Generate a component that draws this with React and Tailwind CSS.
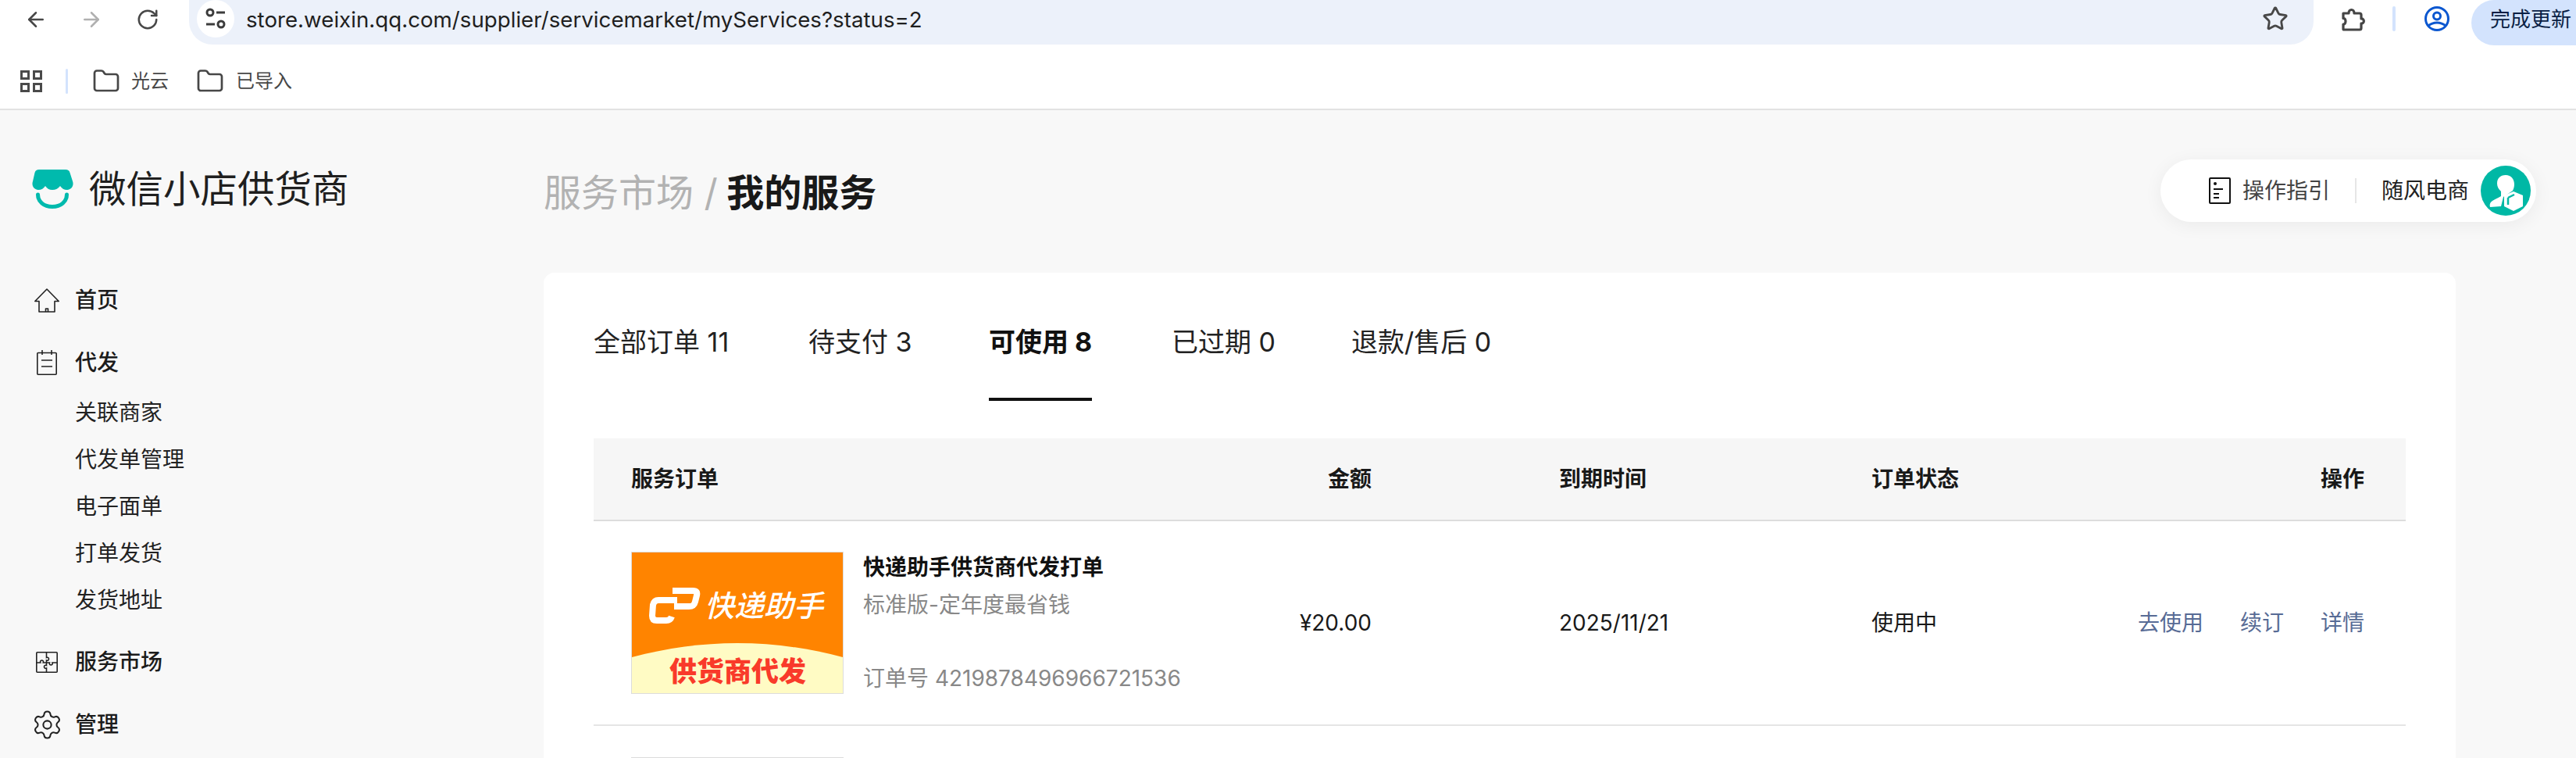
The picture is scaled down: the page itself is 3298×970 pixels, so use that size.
import React from "react";
import { ArrowLeft, ArrowRight, RotateCw, Star, Folder, Settings } from "lucide-react";

const subItems = ["关联商家", "代发单管理", "电子面单", "打单发货", "发货地址"];
const tabs = [
  { label: "全部订单 11", w: "w-[275px]" },
  { label: "待支付 3", w: "w-[231px]" },
  { label: "可使用 8", w: "w-[234px]", active: true },
  { label: "已过期 0", w: "w-[230px]" },
  { label: "退款/售后 0", w: "w-[175px]" },
];

const TuneIcon = () => (
  <svg width="26" height="28" viewBox="0 0 26 28" fill="none" stroke="#3c3c3c" strokeWidth="3">
    <circle cx="6" cy="6" r="4" />
    <path d="M14 6h11M1 21h11" />
    <circle cx="20" cy="21" r="4" />
  </svg>
);

const GridIcon = () => (
  <svg width="28" height="28" viewBox="0 0 28 28" fill="none" stroke="#4a4a4a" strokeWidth="3">
    <rect x="1.500" y="1.500" width="9" height="9" />
    <rect x="17.500" y="1.500" width="9" height="9" />
    <rect x="1.500" y="17.500" width="9" height="9" />
    <rect x="17.500" y="17.500" width="9" height="9" />
  </svg>
);

const ExtensionIcon = () => (
  <svg width="32" height="32" viewBox="0 0 32 32" fill="none" stroke="#454545" strokeWidth="3.200" strokeLinejoin="round">
    <path d="M3 9h7c0-6 7-6 7 0h7c1.500 0 2 .5 2 2v5c4.500-.5 4.500 6.500 0 6v6c0 1.500-.5 2-2 2H4c-1 0-1-.5-1-1v-6c4 .5 4-8 0-7.500V10c0-.5 0-1 0-1z" />
  </svg>
);

const ProfileIcon = () => (
  <svg width="32" height="32" viewBox="0 0 32 32" fill="none" stroke="#0b57d0" strokeWidth="3">
    <circle cx="16" cy="16" r="14.500" />
    <circle cx="16" cy="12.500" r="4.500" />
    <path d="M5 25c6-5.500 16-5.500 22 0" />
  </svg>
);

const LogoIcon = () => (
  <svg width="54" height="50" viewBox="0 0 54 50">
    <path d="M10 0h34c3 0 4.500 1 5.500 4l3.500 11c2 6-2 11-7 11-4 0-7-2-9-5-2 3-6 5-10 5s-7-2-9-5c-2 3-5 5-9 5-5 0-9-5-7-11L4.500 4C5.500 1 7 0 10 0z" fill="#00BAAD" />
    <path d="M8.500 32c0 9 7.500 15.500 18.500 15.500S45.500 41 45.500 32" fill="none" stroke="#00BAAD" strokeWidth="5" strokeLinecap="round" />
  </svg>
);

const HomeIcon = () => (
  <svg width="32" height="31" viewBox="0 0 32 31" fill="none" stroke="#222" strokeWidth="1.600" strokeLinejoin="round">
    <path d="M.8 16.500 16 1l15.200 15.500H26V30H6V16.500z" />
    <path d="M14.500 30v-4h3v4" />
  </svg>
);

const ListIcon = () => (
  <svg width="26" height="32" viewBox="0 0 26 32" fill="none" stroke="#222" strokeWidth="1.600">
    <rect x=".8" y="3.500" width="24.400" height="27.700" rx="1" />
    <path d="M7 0v6M19 0v6M6 13h14M6 21h14" />
  </svg>
);

const PuzzleIcon = () => (
  <svg width="28" height="27" viewBox="0 0 28 27" fill="none" stroke="#222" strokeWidth="1.600">
    <rect x=".8" y=".8" width="26.400" height="25.400" rx="1" />
    <path d="M.8 14h5c-1.500-4 5-4 3.500 0h4.200v-3c4 1.500 4-5 0-3.500V.8M13.500 14h4c-1.500 4 5 4 3.500 0h6.200M13.500 14v3.500c-4-1.500-4 5 0 3.500v5.200" />
  </svg>
);

const GuideIcon = () => (
  <svg width="28" height="34" viewBox="0 0 28 34" fill="none" stroke="#111" strokeWidth="2">
    <rect x="1" y="1" width="26" height="32" rx="1" />
    <circle cx="8" cy="8" r="2" fill="#111" stroke="none" />
    <path d="M6 15h12M6 21h7M6 26h7" />
  </svg>
);

const AvatarIcon = () => (
  <svg width="64" height="64" viewBox="0 0 64 64">
    <circle cx="32" cy="32" r="32" fill="#00B8A5" />
    <path d="M32 12c7 0 11 5 11 12 0 3-1 6-2 8l-12 8-3 12-14 1c-1-3 0-6 3-8 3-2 8-4 11-6v-6c-3-3-5-6-5-10 0-7 4-11 11-11z" fill="#fff" />
    <path d="M42 33l12 5v14l-12 6-12-6V38z" fill="#fff" />
    <path d="M35 41l8-4M35 41v9" fill="none" stroke="#00B8A5" strokeWidth="2.500" />
  </svg>
);

const Cover = () => (
  <div className="relative w-[272px] h-[182px] shrink-0 border border-[#dcdcdc] bg-[#ff8400] overflow-hidden">
    <svg className="absolute left-0 bottom-0" width="270" height="64" viewBox="0 0 270 64">
      <path d="M0 18C90-6 180-6 270 18V64H0z" fill="#fffbc4" />
    </svg>
    <svg className="absolute left-[22px] top-[45px]" width="66" height="46" viewBox="0 0 66 46" fill="none" stroke="#fff" strokeWidth="8" strokeLinejoin="round">
      <path d="M30 4h26c5 0 6 2 5 6l-2 8c-1 4-3 6-8 6H32" />
      <path d="M36 16H12c-4 0-6 2-7 6l-1 14c0 4 2 6 6 6h12c4 0 6-2 7-5" />
    </svg>
    <span className="absolute left-[93px] top-[42px] text-[38px] leading-[52px] font-medium italic text-white whitespace-nowrap">快递助手</span>
    <span className="absolute left-[48px] top-[130px] text-[35px] leading-[44px] font-black text-[#f93a2a] whitespace-nowrap">供货商代发</span>
  </div>
);

const NavRow = ({ icon, label, className }) => (
  <div className={`flex items-center h-[56px] pl-[44px] text-[28px] font-medium text-[#1c1c1c] ${className}`}>
    <span className="w-[32px] flex justify-center mr-[20px]">{icon}</span>
    {label}
  </div>
);

const App = () => {
  return (
    <div className="w-[3298px] h-[970px] overflow-hidden flex flex-col bg-[#f8f8f8] font-['Inter','Noto_Sans_CJK_SC',sans-serif]">
      <div className="h-[58px] bg-white flex items-start shrink-0">
        <div className="flex items-center h-[50px] pl-[31px]">
          <ArrowLeft size={30} color="#474747" strokeWidth={2} />
          <ArrowRight size={30} color="#b0b0b0" strokeWidth={2} className="ml-[41px]" />
          <RotateCw size={30} color="#474747" strokeWidth={2} className="ml-[42px]" />
        </div>
        <div className="ml-[38px] w-[2720px] h-[57px] bg-[#ecf1fa] rounded-b-[30px] flex items-start pl-[10px] pr-[32px]">
          <div className="w-[48px] h-[48px] rounded-full bg-white flex items-center justify-center">
            <TuneIcon />
          </div>
          <span className="ml-[15px] h-[50px] leading-[50px] text-[27.700px] text-[#1f1f1f] whitespace-nowrap">store.weixin.qq.com/supplier/servicemarket/myServices?status=2</span>
          <Star size={34} color="#474747" strokeWidth={2} className="ml-auto mt-[7px]" />
        </div>
        <div className="flex items-center h-[48px] ml-[35px]">
          <ExtensionIcon />
          <div className="w-[4px] h-[32px] bg-[#d3e3fd] rounded-full ml-[34px]" />
          <span className="ml-[37px]"><ProfileIcon /></span>
        </div>
        <div className="ml-[28px] h-[58px] flex-1 bg-[#d3e3fd] rounded-l-[30px] pl-[24px] leading-[50px] text-[26px] text-[#0a1f44] whitespace-nowrap overflow-hidden">
          完成更新
        </div>
      </div>

      <div className="h-[83px] bg-white border-b-2 border-[#e2e2e2] flex items-center pl-[26px] shrink-0 pt-[10px] text-[24px] text-[#474747]">
        <GridIcon />
        <div className="w-[3px] h-[32px] bg-[#d3e3fd] rounded-full ml-[30px]" />
        <Folder size={36} color="#474747" strokeWidth={1.8} className="ml-[31px]" />
        <span className="ml-[14px]">光云</span>
        <Folder size={36} color="#474747" strokeWidth={1.8} className="ml-[35px]" />
        <span className="ml-[15px]">已导入</span>
      </div>

      <div className="flex flex-1 min-h-0">
        <div className="w-[696px] shrink-0 pt-[76px]">
          <div className="flex items-center pl-[40px] h-[50px]">
            <LogoIcon />
            <span className="ml-[20px] text-[47.500px] leading-[50px] text-[#1f1f1f]">微信小店供货商</span>
          </div>
          <div className="mt-[89px]">
            <NavRow icon={<HomeIcon />} label="首页" />
            <NavRow icon={<ListIcon />} label="代发" className="mt-[24px]" />
            <div className="mt-[6px]">
              {subItems.map((item) => (
                <div key={item} className="h-[60px] leading-[60px] pl-[96px] text-[28px] text-[#222]">{item}</div>
              ))}
            </div>
            <NavRow icon={<PuzzleIcon />} label="服务市场" className="mt-[21px]" />
            <NavRow icon={<Settings size={41} color="#222" strokeWidth={1.200} className="shrink-0" />} label="管理" className="mt-[24px]" />
          </div>
        </div>

        <div className="flex-1 flex flex-col min-w-0">
          <div className="h-[208px] shrink-0 flex items-start justify-between pr-[51px]">
            <div className="mt-[76px] text-[48px] leading-[60px] whitespace-nowrap">
              <span className="text-[#b2b2b2]">服务市场 / </span>
              <span className="font-semibold text-[#191919] -ml-[2px]">我的服务</span>
            </div>
            <div className="mt-[63px] w-[481px] h-[80px] rounded-full bg-white shadow-[0_4px_24px_rgba(0,0,0,0.06)] flex items-center pl-[62px] pr-[7px]">
              <GuideIcon />
              <span className="ml-[15px] text-[28px] text-[#444] whitespace-nowrap">操作指引</span>
              <div className="w-[2px] h-[32px] bg-[#e6e6e6] ml-[32px]" />
              <span className="ml-[32px] text-[28px] text-[#222] whitespace-nowrap">随风电商</span>
              <span className="ml-auto"><AvatarIcon /></span>
            </div>
          </div>

          <div className="flex-1 mr-[154px] bg-white rounded-t-[14px] px-[64px] overflow-hidden">
            <div className="flex h-[164px] pt-[64px]">
              {tabs.map((t) => (
                <div key={t.label} className={t.w}>
                  <div className={`inline-block h-[100px] text-[34px] leading-[50px] whitespace-nowrap ${t.active ? "font-bold border-b-4 border-[#111] text-[#111]" : "text-[#222]"}`}>
                    {t.label}
                  </div>
                </div>
              ))}
            </div>
            <div className="mt-[48px] grid grid-cols-[660px_288px_640px_200px_1fr] items-center h-[106px] pl-[48px] pr-[53px] bg-[#f6f6f6] border-b-2 border-[#dddddd] text-[28px] font-bold text-[#191919]">
              <div>服务订单</div>
              <div className="text-right">金额</div>
              <div className="pl-[240px]">到期时间</div>
              <div>订单状态</div>
              <div className="text-right">操作</div>
            </div>
            <div className="grid grid-cols-[660px_288px_640px_200px_1fr] items-center h-[262px] pl-[48px] pr-[53px] border-b-2 border-[#e5e5e5] text-[28px] text-[#191919]">
              <div className="flex">
                <Cover />
                <div className="ml-[25px] flex flex-col h-[182px] whitespace-nowrap">
                  <div className="leading-[40px] font-bold text-[#111]">快递助手供货商代发打单</div>
                  <div className="leading-[40px] mt-[8px] text-[#888]">标准版-定年度最省钱</div>
                  <div className="leading-[40px] mt-auto text-[#888]">订单号 4219878496966721536</div>
                </div>
              </div>
              <div className="text-right">¥20.00</div>
              <div className="pl-[240px]">2025/11/21</div>
              <div>使用中</div>
              <div className="flex justify-end gap-[47px] text-[#576b95] whitespace-nowrap">
                <span>去使用</span>
                <span>续订</span>
                <span>详情</span>
              </div>
            </div>
            <div className="pl-[48px] pt-[40px]">
              <div className="w-[272px] h-[182px] border border-[#dcdcdc]" />
            </div>
          </div>
        </div>
      </div>
    </div>
  );
};

export default App;
